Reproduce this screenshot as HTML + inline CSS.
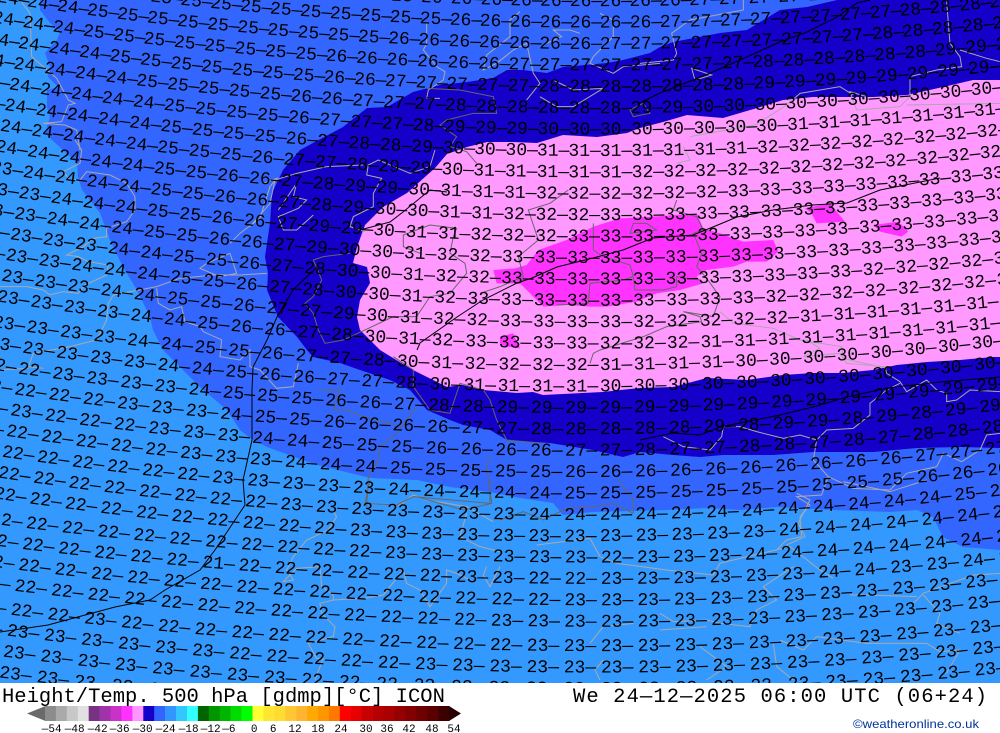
<!DOCTYPE html>
<html lang="en"><head><meta charset="utf-8"><title>Height/Temp. 500 hPa</title>
<style>html,body{margin:0;padding:0;background:#fff;overflow:hidden}svg{display:block}.r text{font-family:"Liberation Mono",monospace;font-size:18px;fill:#000}</style></head>
<body>
<svg xmlns="http://www.w3.org/2000/svg" width="1000" height="733" viewBox="0 0 1000 733">
<defs><path id="a" d="M-60-56.6Q500 39.5 1060-27.5"/><path id="b" d="M-60-45.7Q270 0 600 0Q830 0 1060-27.5"/></defs>
<rect width="1000" height="684" fill="#3399ff"/>
<polygon fill="#3366ff" points="40,0 40,10 50,23 60,32 57,40 45,53 50,67 48,77 58,87 47,90 47,107 50,117 45,133 52,140 77,163 78,177 82,190 100,213 110,240 123,267 137,290 150,317 153,330 163,350 180,367 200,387 227,410 240,430 250,438 267,447 317,465 350,473 370,478 417,480 450,487 490,492 520,498 553,503 563,515 593,512 667,510 707,508 740,510 777,507 833,510 890,512 917,510 933,517 943,537 963,547 1000,550 1000,0"/>
<polygon fill="#1400c8" points="837,0 807,7 780,10 747,30 720,33 673,42 660,47 650,53 623,60 607,63 563,67 547,73 523,70 507,70 493,78 467,82 440,85 413,92 387,107 367,108 343,127 313,143 300,150 283,170 272,193 270,223 265,257 268,273 267,290 278,317 297,337 307,350 313,357 340,363 360,370 390,380 410,390 427,410 450,420 463,425 490,430 507,440 550,443 593,450 623,457 640,452 673,455 700,457 723,455 773,455 813,452 873,452 917,448 960,447 1000,448 1000,0"/>
<polygon fill="#ff99ff" points="1000,80 973,80 943,87 907,95 873,97 813,97 783,100 757,108 723,118 687,115 663,122 640,128 627,133 597,137 563,135 537,143 513,142 487,142 467,147 447,154 435,168 407,193 383,207 365,225 357,247 353,263 367,267 370,283 360,300 357,317 360,330 380,350 393,358 413,370 447,387 463,385 483,390 517,393 533,392 543,395 603,392 640,388 673,387 707,378 747,380 783,375 813,373 843,373 873,370 897,365 927,362 960,360 993,357 1000,357"/>
<g transform="translate(480,190) scale(.3333)" fill="#ff33ff">
<path d="M340 110L420 85 520 80 650 70 670 115 720 130 790 155 880 150 895 185 860 215 800 215 760 230 680 240 650 260 670 280 600 300 530 310 470 335 380 350 330 350 260 345 190 350 140 300 120 280 50 280 40 240 105 235 140 225 175 180 260 150Z"/>
<path d="M975 55L1050 40 1095 95 1010 100 995 70Z"/><path d="M1180 105L1255 95 1285 125 1265 140 1200 125Z"/><path d="M60 440L100 430 120 475 85 470 60 465Z"/></g>
<g fill="none" stroke="#aaa" stroke-width="3">
<path transform="translate(0,0) scale(.3333)" d="M60 0L90 40 95 170 170 235 205 300 225 310 205 315 185 365 130 370 195 375 230 390 240 450"/>
<path transform="translate(0,140) scale(.3333)" d="M225 0L245 30 240 70 190 95 210 120 240 120 260 95 330 105 380 130 405 170 405 210 380 245 320 265 320 290 280 295 250 320 200 345 235 350 265 365 325 375 320 405 255 435 235 460 190 455 150 465 130 450 80 440 0 440M340 465L470 440 540 415 640 405 720 405 800 400M340 465L325 490 320 540 290 600 210 620 100 640 85 680 130 685M85 685L0 690M470 445L475 490 510 510 545 500 555 545 600 560 610 575 665 600 660 650 720 660 750 630 750 680 780 690 830 745 880 740 895 670M690 340L620 370 600 385 660 410 710 400 690 340M780 235L810 140 830 115 790 130M690 310L720 280 780 235"/>
<path transform="translate(280,0) scale(.3333)" d="M440 70L440 130 430 150 470 200 495 215 490 240 445 270 440 295 480 295M720 35L690 60 690 110 620 165 610 210 650 190 700 150 740 130 760 220 780 250 740 300M900 100L870 90 820 90 845 110 800 130M960 40L1000 60 1000 110 940 170 930 190 1000 220 1030 200 1140 190M780 290L830 320 880 320 970 265 880 270 820 240"/>
<path transform="translate(640,0) scale(.3333)" d="M310 0L310 30 150 60 95 100 110 160 100 180 0 190M155 205L215 225 165 240 155 205ZM920 0L925 70 930 130 960 170 965 200 890 210 810 230 810 290 780 320 650 330 630 275 680 290M960 150L1040 175 1080 185M800 315L1080 310M345 375L440 315 480 280 600 260 640 285M150 410L260 390 345 375M130 440L150 480 110 490"/>
<path transform="translate(250,150) scale(.3333)" d="M555 0L540 50 480 70 385 30 355 45 350 75 395 85 370 130 370 170 310 200 300 230 345 245M0 230L60 160 75 90 140 70 230 50 340 45M85 180L140 100 130 140 170 150 145 175 85 200 100 240 140 240 190 195"/>
<path transform="translate(640,340) scale(.3333)" d="M500 0L540 25 490 50 600 40 620 70 735 80 740 100 780 125 800 155 860 120 890 150 920 160 920 185 950 180 990 150 1080 155M70 290L130 320 210 330 245 290 250 260 300 260 350 275 430 295 480 285 530 300 520 360 565 410 640 445 750 450 800 400 890 380 910 340 965 365 1020 330 1040 285 1080 280M530 300L560 270 640 265 690 225 690 190 740 150 780 130M565 410L545 465 470 470 510 495 480 530 485 590 440 600 410 630"/>
<path transform="translate(0,480) scale(.3333)" d="M1000 95L1010 110 985 150 920 180 880 230 860 270 880 300 850 305 890 265 960 260 965 320 1000 345 1000 360 1090 355 1150 345 1210 270 1220 310 1260 330 1290 380 1340 310 1340 270 1370 280 1410 300M1000 360L960 370 965 400 1005 440 1000 470 925 490 950 535 970 535 945 600M1100 70L1200 75 1240 45 1280 60 1400 80 1480 125M1400 100L1380 170 1440 200 1500 215M1460 260L1450 285 1470 320 1500 260"/>
<path transform="translate(500,480) scale(.3333)" d="M110 195L270 175 300 230 350 250 500 270 640 285 660 250 700 240 870 200 960 270 1000 295M880 260L790 320 830 360 770 390 750 440 660 430 620 420 520 425 480 400M480 450L620 440M270 490L310 440 400 430M840 480L910 510 950 470 1100 490 1280 490 1320 515 1380 510 1340 580M820 490L830 560 880 600M890 40L930 60 895 130 915 170 860 195M1030 5L1170 35 1280 0M1250 350L1100 345 1050 345M1270 345L1320 400 1310 430 1380 460M1500 280L1420 285 1270 340 1240 370M600 500L680 560 620 600M310 540L285 570 300 600"/>
<path transform="translate(480,190) scale(.3333)" d="M720 365L760 400 880 415 960 450 1085 470 1090 505 1130 515 1220 535"/>
</g>
<g fill="none" stroke="#666" stroke-width="3">
<path transform="translate(250,150) scale(.3333)" d="M300 310L220 320 190 330 205 365 215 390 190 440 165 460 190 490 205 540 225 580 280 570 345 540 430 500 500 500 540 440 600 430 650 370 645 340 600 310 610 260 620 235 540 225 460 255 460 290 510 310"/>
<path transform="translate(480,190) scale(.3333)" d="M0 310L60 290 130 260 115 200 175 150 145 60 210 40 265 0M340 100L340 180 370 200 450 225 460 260 430 270 330 280 325 340 230 345M460 100L450 130 530 120 500 100ZM590 30L580 60 650 80 670 120 640 130 665 190 650 230 680 265 720 320 700 380 610 365 660 380 665 395 560 410 490 440 360 480 340 490 330 520M460 260L465 300 550 300 590 290 590 260 660 270"/>
<path transform="translate(280,0) scale(.3333)" d="M440 265L540 270 640 290 650 340 580 340 500 360 480 375 530 410 510 440 560 455 590 490M1050 330L1090 310 1110 340 1060 350Z"/>
<path transform="translate(250,350) scale(.3333)" d="M430 20L490 60 490 110 540 180 600 190 630 100 700 120 720 150 740 210 770 270 880 280M500 170L440 250 390 290 385 330 355 380 350 470M205 120L270 120 250 180 290 180 340 200 440 225M720 320L710 350 720 420 725 460 640 480 500 440"/>
<path transform="translate(0,480) scale(.3333)" d="M1110 0L1095 70 1190 75 1240 50 1470 70 1470 0"/>
<path transform="translate(500,480) scale(.3333)" d="M0 120L70 95 130 120 200 85 280 80 340 70 400 100M355 0L400 60 400 100"/>
</g>
<g fill="none" stroke="#000" stroke-width="1">
<polyline points="0,632 48,625 115,607 150,600 165,590 200,570 215,550 235,520 245,505 243,480 252,440 252,390 253,367 267,340 277,317 293,290 317,267"/>
<polyline points="360,230 390,222 403,212 430,190 447,192"/>
<polyline points="417,350 420,343 457,317 483,300 517,283 532,278 557,267 593,258 623,250 653,238 693,235 713,227 737,217 773,210 813,205 847,203 880,190 940,178"/>
<polyline points="640,440 673,433 700,435 720,427 740,423 780,415 813,407 847,397 887,388 940,382 1000,377"/>
<polyline points="640,103 660,93 693,80 713,72 740,60 780,42 807,32 837,17 857,3 870,0"/>
</g>
<g class="r">
<text transform="translate(0,6.1)" word-spacing="-13.44"><textPath href="#a" startOffset="275.3">25— 25— 25— 25— 25— 25— 25— 26— 26— 26— 26— 26— 26— 26— 26— 26— 27— 27— 27— 27— 27— 27— 27— 28— 28— 28— 28—</textPath></text>
<text transform="translate(0,27.5)" word-spacing="-13.2"><textPath href="#a" startOffset="152.2">24— 25— 25— 25— 25— 25— 25— 25— 25— 25— 25— 25— 26— 26— 26— 26— 26— 26— 26— 27— 27— 27— 27— 27— 27— 27— 27— 28— 28— 28— 28—</textPath></text>
<text transform="translate(0,48.9)" word-spacing="-12.96"><textPath href="#a" startOffset="57.4">24— 24— 24— 25— 25— 25— 25— 25— 25— 25— 25— 25— 25— 26— 26— 26— 26— 26— 26— 26— 27— 27— 27— 27— 27— 27— 27— 27— 27— 28— 28— 28— 28— 28—</textPath></text>
<text transform="translate(0,70.3)" word-spacing="-12.72"><textPath href="#a" startOffset="52.6">24— 24— 24— 25— 25— 25— 25— 25— 25— 25— 25— 26— 26— 26— 26— 26— 26— 27— 27— 27— 27— 27— 27— 27— 27— 28— 28— 28— 28— 28— 28— 29— 29— 29—</textPath></text>
<text transform="translate(0,91.7)" word-spacing="-12.48"><textPath href="#a" startOffset="47.8">24— 24— 24— 24— 25— 25— 25— 25— 25— 25— 25— 26— 26— 27— 27— 27— 27— 27— 28— 28— 28— 28— 28— 28— 28— 29— 29— 29— 29— 29— 29— 29— 29— 29—</textPath></text>
<text transform="translate(0,113.1)" word-spacing="-12.24"><textPath href="#a" startOffset="43">24— 24— 24— 24— 24— 25— 25— 25— 25— 25— 26— 26— 27— 27— 27— 28— 28— 28— 28— 28— 28— 29— 29— 30— 30— 30— 30— 30— 30— 30— 30— 30— 30— 30—</textPath></text>
<text transform="translate(0,134.5)" word-spacing="-12"><textPath href="#a" startOffset="38.2">24— 24— 24— 24— 24— 24— 25— 25— 25— 25— 26— 27— 27— 27— 28— 29— 29— 29— 30— 30— 30— 30— 30— 30— 30— 30— 31— 31— 31— 31— 31— 31— 31— 31—</textPath></text>
<text transform="translate(0,155.9)" word-spacing="-11.76"><textPath href="#a" startOffset="33.4">24— 24— 24— 24— 24— 24— 25— 25— 25— 25— 26— 27— 28— 28— 29— 30— 30— 30— 31— 31— 31— 31— 31— 31— 31— 32— 32— 32— 32— 32— 32— 32— 32— 32—</textPath></text>
<text transform="translate(0,177.3)" word-spacing="-11.52"><textPath href="#a" startOffset="60.3">24— 24— 24— 24— 24— 25— 25— 25— 26— 27— 27— 28— 29— 29— 30— 31— 31— 31— 31— 31— 32— 32— 32— 32— 32— 32— 32— 32— 32— 32— 32— 32— 32—</textPath></text>
<text transform="translate(0,198.7)" word-spacing="-11.28"><textPath href="#a" startOffset="55.7">24— 24— 24— 24— 24— 25— 25— 26— 26— 27— 28— 29— 29— 30— 31— 31— 31— 32— 32— 32— 32— 32— 32— 33— 33— 33— 33— 33— 33— 33— 33— 33— 33—</textPath></text>
<text transform="translate(0,220.1)" word-spacing="-11.04"><textPath href="#a" startOffset="51.2">23— 24— 24— 24— 24— 25— 25— 26— 26— 27— 28— 29— 30— 30— 31— 31— 32— 32— 32— 33— 33— 33— 33— 33— 33— 33— 33— 33— 33— 33— 33— 33— 33—</textPath></text>
<text transform="translate(0,241.5)" word-spacing="-10.8"><textPath href="#a" startOffset="46.6">23— 23— 24— 24— 24— 25— 25— 26— 26— 27— 29— 29— 30— 31— 31— 32— 32— 32— 33— 33— 33— 33— 33— 33— 33— 33— 33— 33— 33— 33— 33— 33—</textPath></text>
<text transform="translate(0,262.9)" word-spacing="-10.56"><textPath href="#a" startOffset="42">23— 23— 24— 24— 24— 25— 25— 26— 26— 27— 29— 30— 30— 31— 32— 32— 33— 33— 33— 33— 33— 33— 33— 33— 33— 33— 33— 33— 33— 33— 33— 33—</textPath></text>
<text transform="translate(0,284.3)" word-spacing="-10.32"><textPath href="#a" startOffset="37.5">23— 23— 23— 23— 24— 24— 25— 25— 26— 27— 28— 30— 30— 31— 32— 32— 33— 33— 33— 33— 33— 33— 33— 33— 33— 33— 33— 32— 32— 32— 32— 32—</textPath></text>
<text transform="translate(0,305.7)" word-spacing="-10.08"><textPath href="#a" startOffset="32.9">23— 23— 23— 24— 24— 24— 25— 25— 26— 27— 28— 30— 30— 31— 32— 33— 33— 33— 33— 33— 33— 33— 33— 33— 32— 32— 32— 32— 32— 32— 32— 32—</textPath></text>
<text transform="translate(0,327.1)" word-spacing="-9.84"><textPath href="#a" startOffset="61.7">23— 23— 23— 24— 24— 25— 25— 26— 27— 27— 29— 30— 31— 32— 32— 33— 33— 33— 33— 32— 32— 32— 32— 32— 31— 31— 31— 31— 31— 31— 31—</textPath></text>
<text transform="translate(0,348.5)" word-spacing="-9.6"><textPath href="#a" startOffset="57.4">23— 23— 23— 23— 24— 24— 25— 26— 26— 27— 28— 30— 31— 32— 33— 33— 33— 33— 32— 32— 32— 31— 31— 31— 31— 31— 31— 31— 31— 31— 31—</textPath></text>
<g transform="matrix(1,-.008,0,1,0,4.8)">
<text transform="translate(0,369.9)" word-spacing="-9.36"><textPath href="#a" startOffset="53.1">23— 23— 23— 23— 24— 24— 25— 25— 26— 27— 27— 28— 30— 31— 32— 32— 32— 32— 31— 31— 31— 31— 30— 30— 30— 30— 30— 30— 30— 30— 30—</textPath></text>
<text transform="translate(0,391.3)" word-spacing="-9.12"><textPath href="#a" startOffset="48.8">23— 23— 23— 23— 23— 24— 24— 25— 26— 26— 27— 27— 28— 30— 31— 31— 31— 31— 30— 30— 30— 30— 30— 30— 30— 30— 30— 30— 30— 30— 30—</textPath></text>
<text transform="translate(0,412.7)" word-spacing="-8.88"><textPath href="#a" startOffset="44.4">22— 22— 23— 23— 23— 23— 24— 25— 25— 25— 26— 26— 27— 28— 28— 29— 29— 29— 29— 29— 29— 29— 29— 29— 29— 29— 29— 29— 29— 29— 29—</textPath></text>
<text transform="translate(0,434.1)" word-spacing="-8.64"><textPath href="#a" startOffset="40.1">22— 22— 22— 22— 23— 23— 23— 24— 25— 25— 26— 26— 26— 26— 27— 27— 28— 28— 28— 28— 28— 29— 28— 29— 29— 28— 29— 28— 29— 29— 29—</textPath></text>
<text transform="translate(0,455.5)" word-spacing="-8.4"><textPath href="#a" startOffset="35.8">22— 23— 22— 22— 22— 23— 23— 23— 24— 24— 25— 25— 25— 26— 26— 26— 26— 27— 27— 28— 27— 27— 28— 28— 27— 28— 27— 28— 28— 28— 28—</textPath></text>
<text transform="translate(0,476.9)" word-spacing="-8.16"><textPath href="#a" startOffset="31.5">22— 22— 22— 22— 22— 22— 23— 23— 23— 24— 24— 24— 25— 25— 25— 25— 25— 26— 26— 26— 26— 26— 26— 26— 26— 26— 26— 27— 27— 27— 27—</textPath></text>
<text transform="translate(0,498.3)" word-spacing="-7.92"><textPath href="#a" startOffset="62.4">22— 22— 22— 22— 22— 22— 23— 23— 23— 23— 23— 24— 24— 24— 24— 24— 25— 25— 25— 25— 25— 25— 25— 25— 25— 25— 26— 26— 26— 26—</textPath></text>
<text transform="translate(0,519.7)" word-spacing="-7.68"><textPath href="#a" startOffset="58.4">22— 22— 22— 22— 22— 22— 22— 22— 23— 23— 23— 23— 23— 23— 23— 24— 24— 24— 24— 24— 24— 24— 24— 24— 24— 24— 24— 25— 25—</textPath></text>
<text transform="translate(0,541.1)" word-spacing="-7.44"><textPath href="#a" startOffset="54.3">22— 22— 22— 22— 22— 22— 22— 22— 22— 22— 23— 23— 23— 23— 23— 23— 23— 23— 23— 23— 23— 23— 24— 24— 24— 24— 24— 24— 24—</textPath></text>
</g>
<text transform="translate(0,562.5)" word-spacing="-7.2"><textPath href="#b" startOffset="50.2">22— 22— 22— 22— 22— 22— 22— 22— 22— 22— 22— 23— 23— 23— 23— 23— 23— 22— 23— 23— 23— 24— 24— 24— 24— 24— 24— 24— 24—</textPath></text>
<text transform="translate(0,583.9)" word-spacing="-6.96"><textPath href="#b" startOffset="46.1">22— 22— 22— 22— 22— 22— 21— 22— 22— 22— 22— 22— 22— 23— 23— 22— 22— 23— 23— 23— 23— 23— 23— 24— 24— 23— 23— 24— 24—</textPath></text>
<text transform="translate(0,605.3)" word-spacing="-6.72"><textPath href="#b" startOffset="42">22— 22— 22— 22— 22— 22— 22— 22— 22— 22— 22— 22— 22— 22— 22— 22— 23— 23— 23— 23— 23— 23— 23— 23— 23— 23— 23— 23— 23—</textPath></text>
<text transform="translate(0,626.7)" word-spacing="-6.48"><textPath href="#b" startOffset="38">22— 22— 22— 22— 22— 22— 22— 22— 22— 22— 22— 22— 22— 22— 23— 23— 23— 23— 23— 23— 23— 23— 23— 23— 23— 23— 23— 23— 23—</textPath></text>
<text transform="translate(0,651.1)" word-spacing="-6.24"><textPath href="#b" startOffset="33.9">23— 22— 22— 23— 22— 22— 22— 22— 22— 22— 22— 22— 22— 22— 22— 23— 23— 23— 23— 23— 23— 23— 23— 23— 23— 23— 23— 23— 23—</textPath></text>
<text transform="translate(0,672.5)" word-spacing="-6"><textPath href="#b" startOffset="29.8">23— 23— 23— 23— 23— 23— 23— 22— 22— 22— 22— 22— 23— 23— 23— 23— 23— 23— 23— 23— 23— 23— 23— 23— 23— 23— 23— 23— 23—</textPath></text>
<text transform="translate(0,693.9)" word-spacing="-5.76"><textPath href="#b" startOffset="25.7">23— 23— 23— 23— 23— 23— 23— 23— 23— 22— 22— 22— 23— 23— 23— 23— 23— 23— 23— 23— 23— 23— 23— 23— 23— 23— 23— 23— 23—</textPath></text>
<text transform="translate(0,715.3)" word-spacing="-5.52"><textPath href="#b" startOffset="21.6">23— 23— 23— 23— 23— 23— 23— 23— 23—</textPath></text>
</g>
<rect y="683" width="1000" height="50" fill="#fff"/>
<g font-family="'Liberation Mono',monospace" font-size="20.5" fill="#000">
<text x="2" y="702">Height/Temp. 500 hPa [gdmp][°C] ICON</text>
<text x="573" y="702" letter-spacing="1.09">We 24—12—2025 06:00 UTC (06+24)</text>
</g>
<polygon points="27,713.5 45.5,706 45.5,721" fill="#6a6a6a"/>
<g>
<rect x="45" y="706" width="11.2" height="15" fill="#8c8c8c"/><rect x="55.9" y="706" width="11.2" height="15" fill="#aaaaaa"/><rect x="66.8" y="706" width="11.2" height="15" fill="#c8c8c8"/><rect x="77.8" y="706" width="11.2" height="15" fill="#e1e1e1"/>
<rect x="88.7" y="706" width="11.2" height="15" fill="#783282"/><rect x="99.6" y="706" width="11.2" height="15" fill="#a032aa"/><rect x="110.5" y="706" width="11.2" height="15" fill="#c832c8"/><rect x="121.4" y="706" width="11.2" height="15" fill="#ff32ff"/><rect x="132.4" y="706" width="11.2" height="15" fill="#ff96ff"/>
<rect x="143.3" y="706" width="11.2" height="15" fill="#1400c8"/><rect x="154.2" y="706" width="11.2" height="15" fill="#3264ff"/><rect x="165.1" y="706" width="11.2" height="15" fill="#3296ff"/><rect x="176" y="706" width="11.2" height="15" fill="#32c8ff"/><rect x="187" y="706" width="11.2" height="15" fill="#32ffff"/>
<rect x="197.9" y="706" width="11.2" height="15" fill="#006400"/><rect x="208.8" y="706" width="11.2" height="15" fill="#009600"/><rect x="219.7" y="706" width="11.2" height="15" fill="#00b400"/><rect x="230.6" y="706" width="11.2" height="15" fill="#00dc00"/><rect x="241.6" y="706" width="11.2" height="15" fill="#00ff00"/>
<rect x="252.5" y="706" width="11.2" height="15" fill="#ffff32"/><rect x="263.4" y="706" width="11.2" height="15" fill="#ffe632"/><rect x="274.3" y="706" width="11.2" height="15" fill="#ffdc32"/><rect x="285.2" y="706" width="11.2" height="15" fill="#ffc832"/><rect x="296.2" y="706" width="11.2" height="15" fill="#ffb432"/><rect x="307.1" y="706" width="11.2" height="15" fill="#ffaa00"/><rect x="318" y="706" width="11.2" height="15" fill="#ff9600"/><rect x="328.9" y="706" width="11.2" height="15" fill="#ff7800"/>
<rect x="339.8" y="706" width="11.2" height="15" fill="#ff0000"/><rect x="350.8" y="706" width="11.2" height="15" fill="#e60000"/><rect x="361.7" y="706" width="11.2" height="15" fill="#c80000"/><rect x="372.6" y="706" width="11.2" height="15" fill="#b40000"/><rect x="383.5" y="706" width="11.2" height="15" fill="#aa0000"/><rect x="394.4" y="706" width="11.2" height="15" fill="#960000"/><rect x="405.4" y="706" width="11.2" height="15" fill="#820000"/><rect x="416.3" y="706" width="11.2" height="15" fill="#6e0000"/><rect x="427.2" y="706" width="11.2" height="15" fill="#5a0000"/><rect x="438.1" y="706" width="11.2" height="15" fill="#3c0000"/>
</g>
<polygon points="449,706 461,713.5 449,721" fill="#280000"/>
<g font-family="'Liberation Mono',monospace" font-size="11" fill="#000" text-anchor="end">
<text x="61.6" y="732">—54</text><text x="84.6" y="732">—48</text><text x="107.6" y="732">—42</text><text x="129.6" y="732">—36</text><text x="152.6" y="732">—30</text><text x="175.6" y="732">—24</text><text x="198.6" y="732">—18</text><text x="220.6" y="732">—12</text><text x="235.5" y="732">—6</text><text x="257.5" y="732">0</text><text x="276.5" y="732">6</text><text x="301.6" y="732">12</text><text x="324.6" y="732">18</text><text x="347.6" y="732">24</text><text x="372.6" y="732">30</text><text x="393.6" y="732">36</text><text x="415.6" y="732">42</text><text x="438.6" y="732">48</text><text x="460.6" y="732">54</text>
</g>
<text x="853" y="728" font-family="'Liberation Sans',sans-serif" font-size="12" fill="#003399" textLength="126" lengthAdjust="spacingAndGlyphs">©weatheronline.co.uk</text>
</svg>
</body></html>
